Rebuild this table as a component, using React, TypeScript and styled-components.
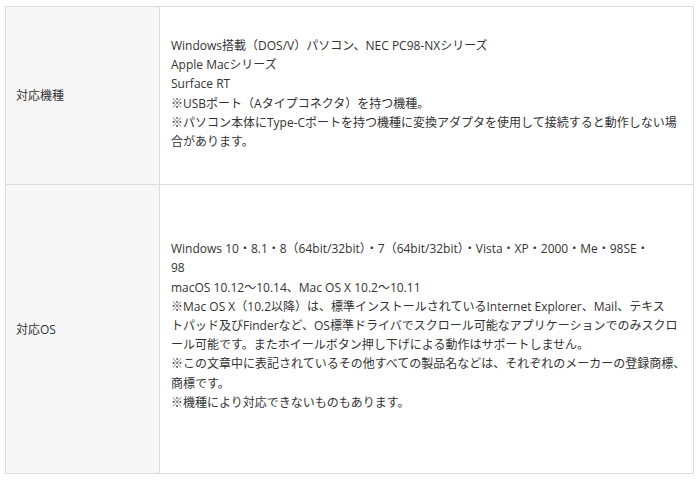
import styled, { createGlobalStyle } from "styled-components";

const GlobalStyle = createGlobalStyle`
  body {
    margin: 0;
    background: #ffffff;
    font-family: "Open Sans", "Noto Sans CJK JP", sans-serif;
    color: #333333;
  }
`;

interface SpecRow {
  label: string;
  lines: string[];
  padTop: number;
  padBottom: number;
}

// each entry is one visual line, broken where the original page wraps
const ROWS: SpecRow[] = [
  {
    label: "対応機種",
    padTop: 29,
    padBottom: 33,
    lines: [
      "Windows搭載（DOS/V）パソコン、NEC PC98-NXシリーズ",
      "Apple Macシリーズ",
      "Surface RT",
      "※USBポート（Aタイプコネクタ）を持つ機種。",
      "※パソコン本体にType-Cポートを持つ機種に変換アダプタを使用して接続すると動作しない場",
      "合があります。",
    ],
  },
  {
    label: "対応OS",
    padTop: 54,
    padBottom: 61,
    lines: [
      "Windows 10・8.1・8（64bit/32bit）・7（64bit/32bit）・Vista・XP・2000・Me・98SE・",
      "98",
      "macOS 10.12～10.14、Mac OS X 10.2～10.11",
      "※Mac OS X（10.2以降）は、標準インストールされているInternet Explorer、Mail、テキス",
      "トパッド及びFinderなど、OS標準ドライバでスクロール可能なアプリケーションでのみスクロ",
      "ール可能です。またホイールボタン押し下げによる動作はサポートしません。",
      "※この文章中に表記されているその他すべての製品名などは、それぞれのメーカーの登録商標、",
      "商標です。",
      "※機種により対応できないものもあります。",
    ],
  },
];

const App = () => {
  return (
    <>
      <GlobalStyle />
      <Page>
        <SpecTable>
          <tbody>
            {ROWS.map((row) => (
              <tr key={row.label}>
                <HeadCell>{row.label}</HeadCell>
                <DataCell padTop={row.padTop} padBottom={row.padBottom}>
                  {row.lines.map((line, i) => (
                    <Line key={i}>{line}</Line>
                  ))}
                </DataCell>
              </tr>
            ))}
          </tbody>
        </SpecTable>
      </Page>
    </>
  );
};

const Page = styled.div`
  padding: 6px 6px 0 5px;
`;

const SpecTable = styled.table`
  width: 689px;
  border-collapse: collapse;
  table-layout: fixed;
  font-size: 12px;
  line-height: 19.2px;
`;

const HeadCell = styled.th`
  width: 154px;
  box-sizing: border-box;
  padding: 0 10px;
  text-align: left;
  font-weight: normal;
  vertical-align: middle;
  background: #f7f7f7;
  border: 1px solid #dcdcdc;
  color: #333333;
`;

const DataCell = styled.td<{ padTop: number; padBottom: number }>`
  padding: ${({ padTop, padBottom }) => `${padTop}px 8px ${padBottom}px 11px`};
  vertical-align: middle;
  border: 1px solid #dcdcdc;
  color: #333333;
`;

const Line = styled.div`
  white-space: nowrap;
`;

export default App;
